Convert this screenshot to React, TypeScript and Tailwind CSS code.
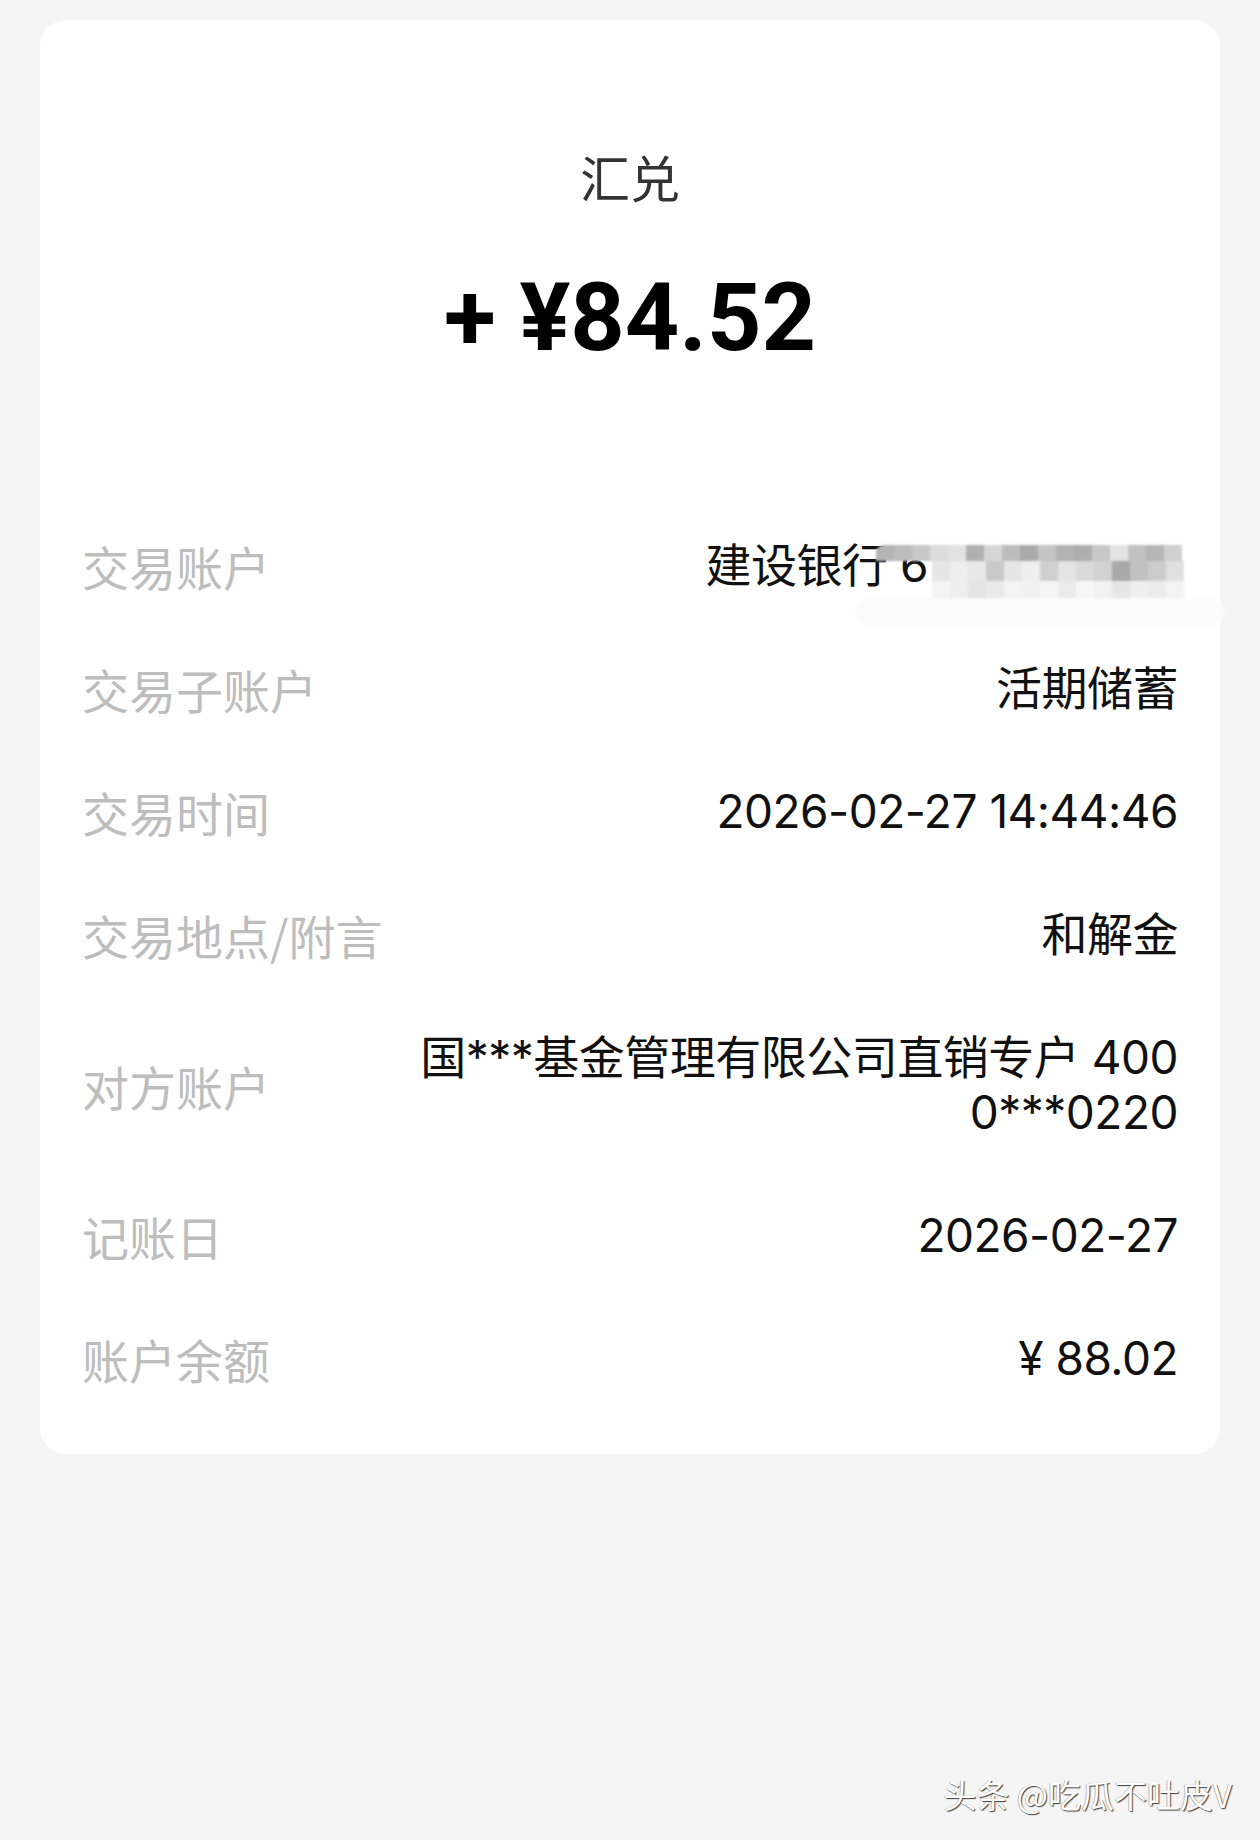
import React from 'react';

const cjk = { fontFamily: '"Noto Sans CJK SC", "Noto Sans", sans-serif' };
const mixed = 'font-[Inter,"Noto_Sans_CJK_SC",sans-serif]';

type Row = { label: string; value: React.ReactNode };

// mosaic tiles over the masked card number
const topBand = ['bg-[#b4b4b4]', 'bg-[#bcbcbc]', 'bg-[#c8c8c8]', 'bg-[#dcdcdc]', 'bg-[#e2e2e2]', 'bg-[#b0b0b0]', 'bg-[#d6d6d6]', 'bg-[#bdbdbd]', 'bg-[#ababab]', 'bg-[#c4c4c4]', 'bg-[#b2b2b2]', 'bg-[#aeaeae]', 'bg-[#c8c8c8]', 'bg-[#e4e4e4]', 'bg-[#c2c2c2]', 'bg-[#b6b6b6]', 'bg-[#d0d0d0]'];
const midBand = ['bg-[#e6e6e6]', 'bg-[#eeeeee]', 'bg-[#e8e8e8]', 'bg-[#c9c9c9]', 'bg-[#e6e6e6]', 'bg-[#efefef]', 'bg-[#cfcfcf]', 'bg-[#e4e4e4]', 'bg-[#dadada]', 'bg-[#d2d2d2]', 'bg-[#a9a9a9]', 'bg-[#c0c0c0]', 'bg-[#cccccc]', 'bg-[#e0e0e0]'];
const lowBand = ['bg-[#f4f4f4]', 'bg-[#eeeeee]', 'bg-[#e4e4e4]', 'bg-[#e9e9e9]', 'bg-[#f3f3f3]', 'bg-[#f1f1f1]', 'bg-[#f5f5f5]', 'bg-[#eaeaea]', 'bg-[#f6f6f6]', 'bg-[#f2f2f2]', 'bg-[#e6e6e6]', 'bg-[#efefef]', 'bg-[#ececec]', 'bg-[#f3f3f3]'];

function MaskedAccount() {
  return (
    <span className="relative inline-block whitespace-nowrap">
      建设银行 6<span className="inline-block w-[250px]" />
      <span className="absolute left-[170px] top-[7px] flex flex-col blur-[1px]">
        <span className="flex">
          {topBand.map((c, j) => (
            <span key={j} className={`h-[16px] w-[18px] ${c} ${j === 0 ? 'rounded-tl-[8px]' : ''}`} />
          ))}
        </span>
        <span className="ml-[56px] flex">
          {midBand.map((c, j) => (
            <span key={j} className={`h-[20px] w-[18px] ${c}`} />
          ))}
        </span>
        <span className="ml-[56px] flex">
          {lowBand.map((c, j) => (
            <span key={j} className={`h-[17px] w-[18px] ${c}`} />
          ))}
        </span>
        <span className="-ml-[20px] h-[28px] w-[368px] rounded-full bg-[#fbfbfb]" />
      </span>
    </span>
  );
}

const rows: Row[] = [
  { label: '交易账户', value: <MaskedAccount /> },
  { label: '交易子账户', value: '活期储蓄' },
  { label: '交易时间', value: '2026-02-27 14:44:46' },
  { label: '交易地点/附言', value: '和解金' },
  {
    label: '对方账户',
    value: (
      <>
        国***基金管理有限公司直销专户 400
        <br />
        0***0220
      </>
    ),
  },
  { label: '记账日', value: '2026-02-27' },
  { label: '账户余额', value: '¥ 88.02' },
];

export default function App() {
  return (
    <div className="relative min-h-[1840px] w-[1260px] bg-[#f5f5f5] pt-[20px]" style={cjk}>
      <div className="mx-[40px] rounded-[26px] bg-white pb-[34px]">
        {/* header */}
        <div className="flex flex-col items-center pt-[126px]">
          <div className="text-[50px] leading-[60px] text-[#333333]">汇兑</div>
          <div className="mt-[66px] font-[Roboto,sans-serif] text-[95px] font-bold leading-[92px] text-black">
            + ¥84.52
          </div>
        </div>

        {/* detail rows */}
        <div className="mt-[140px] px-[42px]">
          {rows.map((r) => (
            <div key={r.label} className="flex items-center justify-between gap-8 py-[34px]">
              <div className="shrink-0 text-[47px] leading-[55px] text-[#bdbdbd]">{r.label}</div>
              <div className={`text-right text-[46px] leading-[55px] tracking-[-0.5px] text-[#111111] ${mixed}`}>
                {r.value}
              </div>
            </div>
          ))}
        </div>
      </div>

      {/* watermark */}
      <div className="absolute bottom-[26px] right-[28px] text-[33px] leading-[40px] text-white [text-shadow:1px_1px_1px_rgba(0,0,0,0.75),-1px_0_0_rgba(0,0,0,0.25)]">
        头条 @吃瓜不吐皮V
      </div>
    </div>
  );
}
